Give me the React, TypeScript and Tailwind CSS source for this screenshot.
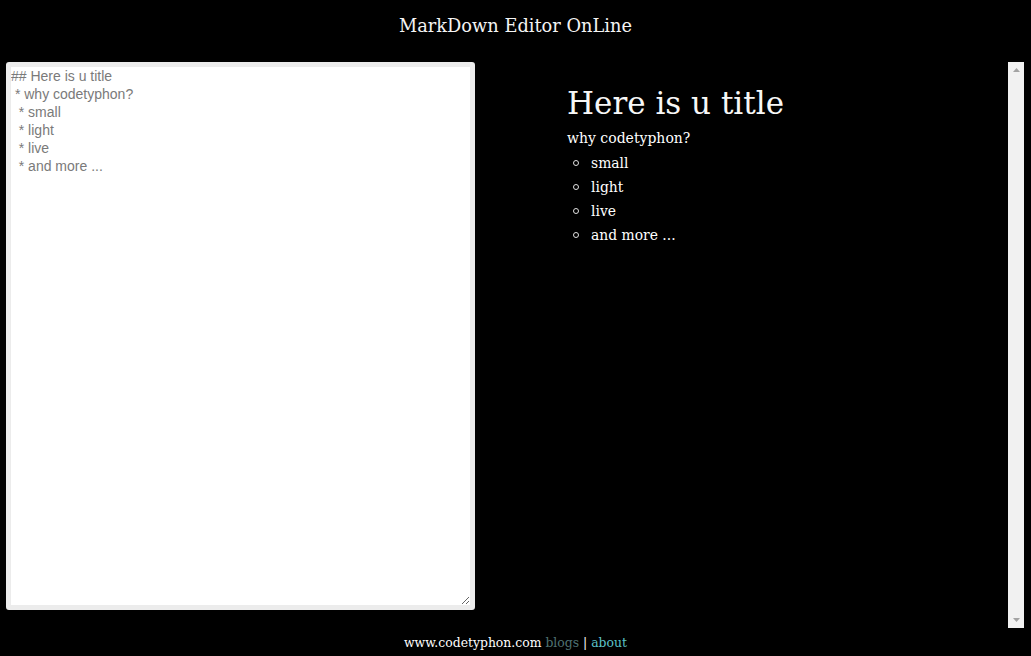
import { useState } from "react";

const initial = `## Here is u title
 * why codetyphon?
  * small
  * light
  * live
  * and more ...`;

const items = ["small", "light", "live", "and more ..."];

export default function App() {
    const [text, setText] = useState(initial);

    return (
        <div className="flex h-[656px] w-full flex-col bg-black font-['DejaVu_Serif',serif] text-white">
            {/* Header */}
            <div className="flex h-[62px] shrink-0 justify-center pt-[14px]">
                <h1 className="text-[17.8px] leading-[24px] text-[#f4f4f4]">MarkDown Editor OnLine</h1>
            </div>

            {/* Editor + Preview */}
            <div className="flex h-[566px] shrink-0">
                <div className="w-[490px] shrink-0 pl-[6px]">
                    <textarea
                        value={text}
                        onChange={(e) => setText(e.target.value)}
                        className="h-[548px] w-[469px] resize rounded-[3px] border-[5px] border-[#ececec] bg-white px-0 pt-0 font-['Liberation_Sans',Arial,sans-serif] text-[14px] leading-[18px] text-[#7a7a7a] outline-none"
                    />
                </div>

                <div className="flex h-full w-[534px] shrink-0">
                    <div className="flex-1 pl-[77px] pt-[19px]">
                        <h2 className="text-[31px] leading-[44px] text-[#f7f7f7]">Here is u title</h2>
                        <p className="mt-[2px] text-[14px] leading-[22px]">why codetyphon?</p>
                        <ul className="mt-[2px] text-[13.9px] leading-[24px]">
                            {items.map((item) => (
                                <li key={item} className="flex items-center">
                                    <span className="ml-[6px] mr-[12px] h-[6px] w-[6px] rounded-full border border-[#e0e0e0]" />
                                    {item}
                                </li>
                            ))}
                        </ul>
                    </div>

                    {/* Scrollbar */}
                    <div className="flex w-[16px] shrink-0 flex-col justify-between bg-[#f1f1f1]">
                        <div className="flex h-[16px] items-center justify-center">
                            <svg width="7" height="4" viewBox="0 0 7 4">
                                <path d="M3.5 0L7 4H0Z" fill="#a3a3a3" />
                            </svg>
                        </div>
                        <div className="flex h-[16px] items-center justify-center">
                            <svg width="7" height="4" viewBox="0 0 7 4">
                                <path d="M0 0H7L3.5 4Z" fill="#a3a3a3" />
                            </svg>
                        </div>
                    </div>
                </div>
            </div>

            {/* Footer */}
            <div className="flex flex-1 items-center justify-center pt-[2px] text-[12.4px]">
                <span className="text-white">www.codetyphon.com</span>
                <a href="#" className="ml-[4px] text-[#4f7272]">blogs</a>
                <span className="mx-[4px] text-white">|</span>
                <a href="#" className="text-[#5cc3c9]">about</a>
            </div>
        </div>
    );
}
